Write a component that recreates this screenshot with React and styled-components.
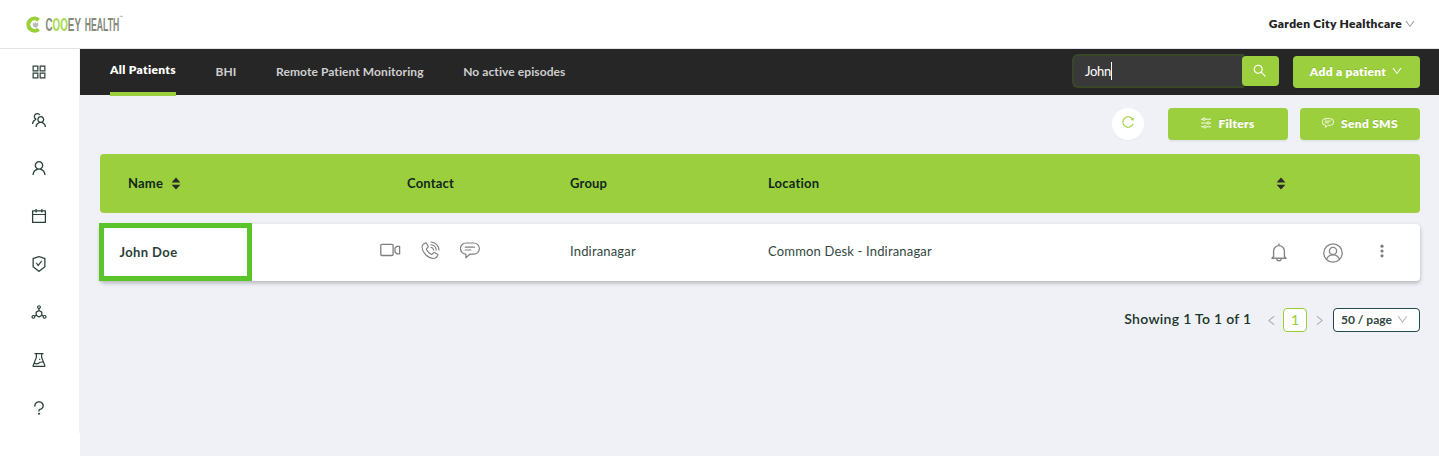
import React from 'react';
import styled, { createGlobalStyle } from 'styled-components';
import {
  AiOutlineAppstore,
  AiOutlineTeam,
  AiOutlineUser,
  AiOutlineCalendar,
  AiOutlineSafetyCertificate,
  AiOutlineDeploymentUnit,
  AiOutlineExperiment,
  AiOutlineQuestion,
  AiOutlineDown,
  AiOutlineLeft,
  AiOutlineRight,
  AiOutlineSearch,
  AiOutlineReload,
} from 'react-icons/ai';

const green = '#9ccf3d';
const ink = '#2a4038';

const GlobalStyle = createGlobalStyle`
  *, *::before, *::after { box-sizing: border-box; }
  body { margin: 0; background: #eff1f6; font-family: Lato, "Liberation Sans", sans-serif; }
  svg { display: block; flex: none; }
`;

const Page = styled.div`
  height: 456px;
  display: flex;
  flex-direction: column;
  overflow: hidden;
`;

const Header = styled.header`
  height: 49px;
  flex: none;
  display: flex;
  align-items: center;
  justify-content: space-between;
  padding: 0 23px 0 25px;
  background: #fff;
  border-bottom: 1px solid #e1e3e6;
`;

const Account = styled.div`
  display: flex;
  align-items: center;
  gap: 2px;
  padding-bottom: 2px;
  font-size: 12px;
  font-weight: 800;
  letter-spacing: 0.31px;
  color: #222;
  svg { color: #999; margin-top: 1px; }
`;

const Body = styled.div`
  flex: 1;
  display: flex;
  min-height: 0;
`;

const Sidebar = styled.aside`
  width: 80px;
  flex: none;
  background: #fff;
`;

const Menu = styled.nav`
  height: 384px;
  display: flex;
  flex-direction: column;
  align-items: center;
  border-right: 1px solid #eff1f6;
`;

const MenuItem = styled.a`
  height: 48px;
  display: flex;
  align-items: center;
  padding: 0 1px 3px 0;
  font-size: 18px;
  color: ${ink};
`;

const Main = styled.main`
  flex: 1;
  min-width: 0;
`;

const NavBar = styled.div`
  height: 46px;
  display: flex;
  justify-content: space-between;
  padding: 0 19px 0 30px;
  background: #262626;
`;

const Tabs = styled.div`
  display: flex;
  gap: 39.6px;
`;

const Tab = styled.a`
  height: ${(p) => (p.$active ? '47px' : '46px')};
  padding-top: ${(p) => (p.$active ? '13px' : '15px')};
  line-height: 16px;
  white-space: nowrap;
  font-size: 12px;
  font-weight: ${(p) => (p.$active ? 800 : 700)};
  letter-spacing: ${(p) => (p.$active ? '0.31px' : '0.09px')};
  color: ${(p) => (p.$active ? '#fff' : '#cfcfcf')};
  border-bottom: ${(p) => (p.$active ? `4px solid ${green}` : 'none')};
`;

const NavActions = styled.div`
  display: flex;
  align-items: flex-start;
  padding-top: 5px;
`;

const SearchBox = styled.div`
  width: 172px;
  height: 34px;
  display: flex;
  align-items: center;
  padding: 0 0 1px 11px;
  border: 2px solid #3b4528;
  border-right: 0;
  border-radius: 6px 0 0 6px;
  background: #393939;
  color: #fff;
  font-size: 13px;
  letter-spacing: -0.28px;
`;

const Caret = styled.span`
  width: 1px;
  height: 18px;
  background: #fff;
`;

const SearchButton = styled.button`
  width: 37px;
  height: 30px;
  margin: 2px 14px 0 -2px;
  padding: 0 1px 0 0;
  border: 0;
  border-radius: 4px;
  background: ${green};
  color: #fff;
  font-size: 15.5px;
  display: flex;
  align-items: center;
  justify-content: center;
`;

const Button = styled.button`
  width: ${(p) => p.$width}px;
  height: 32px;
  margin-top: ${(p) => p.$top || 0}px;
  padding: 0 0 2px;
  display: flex;
  align-items: center;
  justify-content: center;
  gap: ${(p) => p.$gap || 7}px;
  border: 0;
  border-radius: 4px;
  background: ${green};
  box-shadow: 0 2px 0 rgba(0, 0, 0, 0.045);
  color: #fff;
  font: 800 12px Lato, "Liberation Sans", sans-serif;
  letter-spacing: 0.29px;
  text-shadow: 0 -1px 0 rgba(0, 0, 0, 0.12);
`;

const Toolbar = styled.div`
  height: 59px;
  display: flex;
  justify-content: flex-end;
  gap: 12px;
  padding: 13px 19px 0 0;
`;

const Reload = styled.button`
  width: 32px;
  height: 32px;
  margin-right: 12px;
  padding: 0 0 4px;
  display: flex;
  align-items: center;
  justify-content: center;
  border: 0;
  border-radius: 50%;
  background: #fff;
  box-shadow: 0 2px 0 rgba(0, 0, 0, 0.016);
  color: ${green};
  font-size: 14px;
`;

const Table = styled.section`
  margin: 0 19px 0 20px;
  display: flex;
  flex-direction: column;
  gap: 11px;
`;

const columns = '280px 190px 198px 491px 1fr';

const TableHead = styled.div`
  height: 59px;
  display: grid;
  grid-template-columns: ${columns};
  align-items: center;
  border-radius: 4px;
  background: ${green};
  color: #10281c;
  font-size: 13px;
  font-weight: 700;
  letter-spacing: 0.2px;
`;

const HeadCell = styled.div`
  display: flex;
  align-items: center;
  gap: 8px;
  line-height: 16px;
  padding: 0 0 1px ${(p) => p.$indent || 0}px;
  svg { margin-top: 1px; }
`;

const Row = styled.div`
  position: relative;
  height: 57px;
  display: grid;
  grid-template-columns: ${columns};
  align-items: center;
  border-radius: 4px;
  background: #fff;
  box-shadow: 0 2px 4px rgba(0, 0, 0, 0.26);
  color: #33473f;
  font-size: 13px;
  letter-spacing: 0.17px;
`;

const Cell = styled.div`
  line-height: 16px;
  padding-bottom: 3px;
`;

const PatientName = styled.div`
  padding: 0 0 1px 19.5px;
  line-height: 16px;
  font-weight: 700;
  letter-spacing: 0.39px;
  color: #2c4037;
`;

const Highlight = styled.div`
  position: absolute;
  left: -1px;
  top: -1px;
  width: 153px;
  height: 58px;
  border: 5px solid #5bc42b;
`;

const ContactIcons = styled.div`
  display: flex;
  align-items: center;
  gap: 20px;
  padding-bottom: 5px;
  color: #808080;
`;

const RowActions = styled.div`
  display: flex;
  align-items: center;
  padding-left: 12px;
  color: #858585;
`;

const ActionSlot = styled.span`
  margin-right: ${(p) => p.$after || 0}px;
  padding-bottom: ${(p) => p.$lift || 0}px;
`;

const Pagination = styled.footer`
  height: 24px;
  margin: 27px 19px 0 0;
  display: flex;
  align-items: center;
  justify-content: flex-end;
  color: #a9abb0;
  font-size: 13px;
`;

const Summary = styled.span`
  margin-right: 13px;
  padding-bottom: 4px;
  color: #1b3529;
  font-size: 14px;
  font-weight: 600;
  letter-spacing: 0.3px;
`;

const PageNumber = styled.span`
  width: 24px;
  height: 24px;
  margin: 0 5.500px;
  border: 1px solid ${green};
  border-radius: 4px;
  background: #fff;
  color: ${green};
  font-size: 14px;
  font-weight: 500;
  line-height: 21px;
  text-align: center;
`;

const PageSize = styled.span`
  width: 87px;
  height: 24px;
  margin-left: 7.500px;
  padding: 0 10px 1px 7px;
  display: flex;
  align-items: center;
  justify-content: space-between;
  border: 1px solid #24474a;
  border-radius: 4px;
  background: #fff;
  color: #33473f;
  font-size: 12px;
  font-weight: 700;
  svg { color: #b8b8b8; }
`;

const LogoBox = styled.div`
  display: flex;
  align-items: center;
  padding-bottom: 1px;
`;

const Logo = () => (
  <LogoBox>
    <svg width="100" height="24" viewBox="0 0 100 24">
      <path d="M13.600 8.200A6.100 6.100 0 1 0 13.600 17.200" fill="none" stroke="#9bd03b" strokeWidth="4" />
      <path d="M7.800 10.600v3.400l2.600 2 2.800-2v-3.400l-1.800.8-1-1.400-1 1.400z" fill="#b9bcb7" />
      <g fontFamily="'Liberation Sans', sans-serif" fontSize="18" fontWeight="700" fill="#858a7c">
        <text transform="translate(20.500 19.400) scale(.545 1)">
          C<tspan fill="#a4da48">OO</tspan>EY
        </text>
        <text transform="translate(59.800 19.400) scale(.482 1)">HEALTH</text>
      </g>
      <path d="M95.200 4.300h2.600" stroke="#aaa" strokeWidth="1" />
    </svg>
  </LogoBox>
);

const SortIcon = () => (
  <svg width="10" height="13" viewBox="0 0 10 13" fill="#2b2b2b">
    <path d="M5 .6 9.400 5.400H.6zM5 12.600 9.400 7.800H.6z" />
  </svg>
);

const SlidersIcon = () => (
  <svg width="10" height="12" viewBox="0 0 10 12" fill="none" stroke="currentColor" strokeWidth=".9">
    <path d="M0 2.200h1.700M4.300 2.200H10M0 6h5.900M8.500 6H10M0 9.800h2.500M5.100 9.800H10" />
    <circle cx="3" cy="2.200" r="1.200" />
    <circle cx="7.200" cy="6" r="1.200" />
    <circle cx="3.800" cy="9.800" r="1.200" />
  </svg>
);

const ChatIcon = ({ size = 20, weight = 1.2 }) => (
  <svg width={size} height={size * 0.85} viewBox="0 0 20 17" fill="none" stroke="currentColor" strokeWidth={weight} strokeLinejoin="round" strokeLinecap="round">
    <path d="M6.200 1h7.600a5.300 5.300 0 0 1 0 11.200H9.800L5.900 15.800v-3.600A5.500 5.500 0 0 1 6.200 1z" />
    <path d="M5.300 5.200h9.200M5.300 8h5.600" />
  </svg>
);

const VideoIcon = () => (
  <svg width="21" height="14" viewBox="0 0 21 14" fill="none" stroke="currentColor" strokeWidth="1.300" strokeLinejoin="round">
    <rect x=".8" y="1.300" width="12.300" height="11.200" rx="1" />
    <path d="M15 5.100 17 3.300h2.600v7.600H17l-2-1.800z" />
  </svg>
);

const PhoneIcon = () => (
  <svg width="19" height="19" viewBox="0 0 19 19" fill="none" stroke="currentColor" strokeWidth="1.150" strokeLinejoin="round" strokeLinecap="round">
    <path d="M2.600 3 4.200 2.100c.6-.3 1.200-.1 1.500.5L7 5c.3.6.2 1.200-.3 1.600l-.9.8c-.4.400-.4.900-.2 1.400 1 2 2.500 3.400 4.500 4.400.5.200 1 .2 1.300-.2l.9-1c.4-.5 1-.6 1.600-.3l2.300 1.400c.6.300.8.900.5 1.500-1 1.900-2.400 3-4.300 2.900C6.600 17.100 1.300 11.700 1 6.200c0-1.400.5-2.500 1.600-3.200z" />
    <path d="M10 1c4.300.2 7.700 3.600 8 8M10 3.700c2.900.2 5 2.300 5.200 5.300M10 6.300c1.500.2 2.400 1.100 2.600 2.700" />
  </svg>
);

const BellIcon = () => (
  <svg width="16" height="19" viewBox="0 0 16 19" fill="none" stroke="currentColor" strokeWidth="1.400" strokeLinejoin="round">
    <path d="M2.600 13.600V8a5.400 5.400 0 0 1 10.800 0v5.600l1.600 1.700H1zM8 2.600V.6" />
    <path d="M5.800 15.600a2.200 2.200 0 0 0 4.400 0" />
  </svg>
);

const ProfileIcon = () => (
  <svg width="20" height="20" viewBox="0 0 20 20" fill="none" stroke="currentColor" strokeWidth="1.300">
    <circle cx="10" cy="10" r="9.200" />
    <circle cx="10" cy="7.900" r="3.600" />
    <path d="M3.600 16.300c1-3 3.400-4.500 6.400-4.500s5.400 1.500 6.400 4.500" />
  </svg>
);

const DotsIcon = () => (
  <svg width="4" height="14" viewBox="0 0 4 14" fill="#7d7d7d">
    <circle cx="2" cy="2.200" r="1.600" />
    <circle cx="2" cy="7" r="1.600" />
    <circle cx="2" cy="11.800" r="1.600" />
  </svg>
);

const menuIcons = [
  AiOutlineAppstore,
  AiOutlineTeam,
  AiOutlineUser,
  AiOutlineCalendar,
  AiOutlineSafetyCertificate,
  AiOutlineDeploymentUnit,
  AiOutlineExperiment,
  AiOutlineQuestion,
];

const tabs = ['All Patients', 'BHI', 'Remote Patient Monitoring', 'No active episodes'];

export default function App() {
  return (
    <Page>
      <GlobalStyle />
      <Header>
        <Logo />
        <Account>
          Garden City Healthcare
          <AiOutlineDown size={12} />
        </Account>
      </Header>
      <Body>
        <Sidebar>
          <Menu>
            {menuIcons.map((Icon, i) => (
              <MenuItem key={i}>
                <Icon />
              </MenuItem>
            ))}
          </Menu>
        </Sidebar>
        <Main>
          <NavBar>
            <Tabs>
              {tabs.map((label, i) => (
                <Tab key={label} $active={i === 0}>
                  {label}
                </Tab>
              ))}
            </Tabs>
            <NavActions>
              <SearchBox>
                John
                <Caret />
              </SearchBox>
              <SearchButton>
                <AiOutlineSearch />
              </SearchButton>
              <Button $width={127} $top={2} $gap={5}>
                Add a patient
                <AiOutlineDown size={12} />
              </Button>
            </NavActions>
          </NavBar>
          <Toolbar>
            <Reload>
              <AiOutlineReload />
            </Reload>
            <Button $width={120}>
              <SlidersIcon />
              Filters
            </Button>
            <Button $width={120}>
              <ChatIcon size={12} weight={1.4} />
              Send SMS
            </Button>
          </Toolbar>
          <Table>
            <TableHead>
              <HeadCell $indent={28}>
                Name
                <SortIcon />
              </HeadCell>
              <HeadCell $indent={27}>Contact</HeadCell>
              <HeadCell>Group</HeadCell>
              <HeadCell>Location</HeadCell>
              <HeadCell $indent={17}>
                <SortIcon />
              </HeadCell>
            </TableHead>
            <Row>
              <PatientName>John Doe</PatientName>
              <ContactIcons>
                <VideoIcon />
                <PhoneIcon />
                <ChatIcon />
              </ContactIcons>
              <Cell>Indiranagar</Cell>
              <Cell>Common Desk - Indiranagar</Cell>
              <RowActions>
                <ActionSlot $after={36}>
                  <BellIcon />
                </ActionSlot>
                <ActionSlot $after={37}>
                  <ProfileIcon />
                </ActionSlot>
                <ActionSlot $lift={4}>
                  <DotsIcon />
                </ActionSlot>
              </RowActions>
              <Highlight />
            </Row>
          </Table>
          <Pagination>
            <Summary>Showing 1 To 1 of 1</Summary>
            <AiOutlineLeft />
            <PageNumber>1</PageNumber>
            <AiOutlineRight />
            <PageSize>
              50 / page
              <AiOutlineDown size={13} />
            </PageSize>
          </Pagination>
        </Main>
      </Body>
    </Page>
  );
}
